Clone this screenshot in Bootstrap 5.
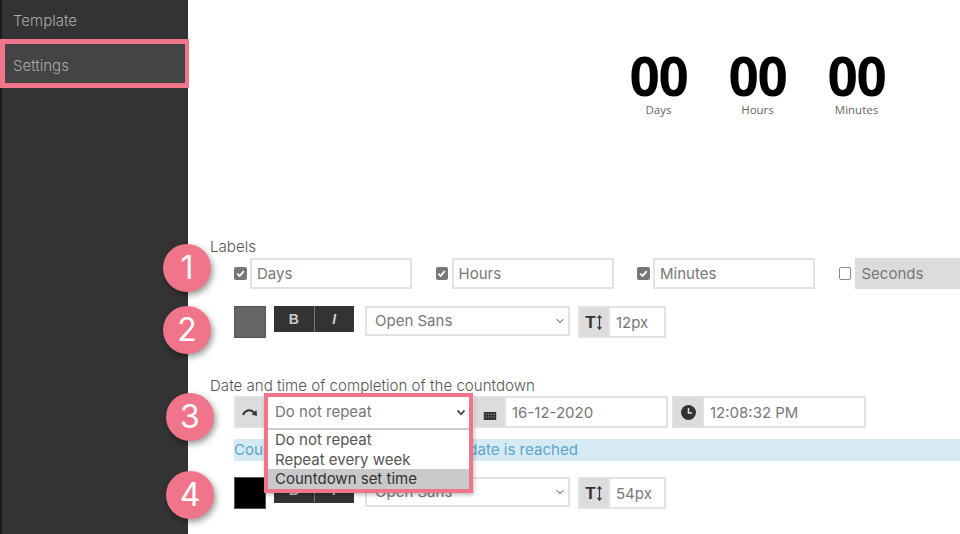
<!DOCTYPE html>
<html lang="en">
<head>
<meta charset="utf-8">
<title>Countdown settings</title>
<link href="https://cdn.jsdelivr.net/npm/bootstrap@5.3.0/dist/css/bootstrap.min.css" rel="stylesheet">
<style>
html,body{height:534px;overflow:hidden;background:#fff}
body{font-family:Inter,"Liberation Sans",sans-serif;font-size:15px;color:#666;position:relative}
.app-shell{height:534px;width:960px}
.side-panel{width:188px;flex:none;background:#333;border-left:2px solid #1c1c1c;padding-top:1px}
.side-link{display:block;height:39px;line-height:39px;padding-left:11px;color:#aaa;font-size:15px;font-weight:300;text-decoration:none}
.side-link.now{height:48px;line-height:52px;background:#444}
.main-pane{width:772px;overflow:hidden;flex:none}
.clock-strip{padding:49px 0 0 421px;height:238px}
.clock-cell{width:99px;text-align:center}
.clock-num{font-family:"Open Sans",sans-serif;font-weight:700;font-size:53px;line-height:54px;color:#000;letter-spacing:-1.2px}
.clock-cap{font-family:"Open Sans",sans-serif;font-size:11.5px;line-height:14px;color:#666}
.group-title{padding-left:22px;font-weight:300;line-height:17px;color:#555;font-size:15.1px}
.tool-row{padding-left:46px;display:flex;align-items:flex-start}
.label-row{margin-top:3px;height:48px}
.label-item{display:flex;align-items:center;width:201.5px;flex:none}
.tick{width:12.5px;height:12.5px;flex:none;border-radius:2px;background:#777;display:flex;align-items:center;justify-content:center;margin-right:3.5px}
.tick.off{background:#fff;border:1px solid #888}
.field{height:31px;width:162px;flex:none;border:2px solid #e2e2e2;border-radius:0;padding:0 5px;color:#777;font-size:15px;font-family:inherit;background:#fff}
.field.locked{background:#dcdcdc;width:170px;border-color:#dcdcdc}
.swatch{width:32px;height:32px;flex:none;border:1px solid #555;background:#666}
.swatch.black{background:#000}
.bi-group{margin-left:8px;display:flex;height:26px;width:80px;flex:none}
.bi-btn{flex:1;background:#333;color:#ccc;border:0;border-left:1px solid #777;padding:0;font-size:14px;font-weight:700;line-height:26px;border-radius:0;font-family:"Liberation Sans",sans-serif}
.bi-btn:first-child{border-left:0}
.pick{height:30px;width:205px;flex:none;margin-left:11px;border:2px solid #e2e2e2;border-radius:0;padding:0 6px 0 8px;font-size:15px;color:#777;font-family:inherit;background-position:right 3px center;background-size:10px 8px;line-height:26px}
.pick:focus{box-shadow:none;border-color:#e2e2e2}
.unit-group{display:flex;margin-left:8px;height:32px;flex:none}
.addon{width:32px;height:100%;background:#dcdcdc;border:2px solid #e2e2e2;display:flex;align-items:center;justify-content:center;flex:none;color:#333}
.addon b{font-family:"Liberation Sans",sans-serif;font-size:17px;line-height:1}
.unit-field{width:56px;height:32px;border:2px solid #e2e2e2;border-left:0;padding:0 6px;font-size:15px;color:#777;font-family:inherit;border-radius:0}
.style-row{height:48px}
.date-title{margin-top:23px}
.date-row{margin-top:2px;height:32px}
.date-pick{height:32px;width:204px;flex:none;border-left:0;border-radius:0}
.date-group{display:flex;flex:none;height:32px;width:194px;margin-left:4px}
.date-field{flex:1;min-width:0;height:32px;border:2px solid #e2e2e2;border-left:0;border-radius:0;padding:0 6px;font-size:15px;color:#777;font-family:inherit}
.cal-icon{margin-top:7px}
.info-strip{margin:11px 0 0 46px;height:22px;line-height:22px;background:#d6eaf4;color:#5ba5cc;font-size:15.1px}
.finish-row{margin-top:16px}
.pin{position:absolute;width:48px;height:48px;border-radius:50%;background:#f0758a;color:#fff;font-size:32px;font-weight:400;line-height:48px;text-align:center;box-shadow:2px 3px 6px rgba(0,0,0,.4);font-family:Inter,sans-serif}
.pin-a{left:163px;top:244px}
.pin-b{left:163px;top:306px}
.pin-c{left:166px;top:393px}
.pin-d{left:166px;top:471px}
.menu-frame{position:absolute;left:264px;top:393px;width:209px;height:100px;border:4px solid #f0758a;background:#fff;box-shadow:1px 2px 4px rgba(0,0,0,.25)}
.menu-head{height:33px;display:flex;align-items:center;justify-content:space-between;padding:0 3px 1px 7px;color:#777;border-bottom:2px solid #ccc;font-size:15px}
.menu-line{height:19.5px;line-height:19.5px;padding-left:7px;color:#555;font-size:15px}
.menu-line.picked{background:#c9c9c9;color:#333}
.focus-frame{position:absolute;left:0;top:39px;width:189px;height:49px;border:5px solid #f0758a;border-right-width:4px;pointer-events:none}
</style>
</head>
<body>
<div class="app-shell d-flex">
  <nav class="side-panel">
    <a class="side-link" href="#">Template</a>
    <a class="side-link now" href="#">Settings</a>
  </nav>
  <main class="main-pane">
    <div class="clock-strip d-flex">
      <div class="clock-cell"><div class="clock-num">00</div><div class="clock-cap">Days</div></div>
      <div class="clock-cell"><div class="clock-num">00</div><div class="clock-cap">Hours</div></div>
      <div class="clock-cell"><div class="clock-num">00</div><div class="clock-cap">Minutes</div></div>
    </div>
    <div class="group-title">Labels</div>
    <div class="tool-row label-row">
      <div class="label-item"><span class="tick"><svg width="9" height="9" viewBox="0 0 10 10"><path d="M1.5 5.2 4 7.8 8.6 2.3" fill="none" stroke="#fff" stroke-width="2"/></svg></span><input class="field" value="Days"></div>
      <div class="label-item"><span class="tick"><svg width="9" height="9" viewBox="0 0 10 10"><path d="M1.5 5.2 4 7.8 8.6 2.3" fill="none" stroke="#fff" stroke-width="2"/></svg></span><input class="field" value="Hours"></div>
      <div class="label-item"><span class="tick"><svg width="9" height="9" viewBox="0 0 10 10"><path d="M1.5 5.2 4 7.8 8.6 2.3" fill="none" stroke="#fff" stroke-width="2"/></svg></span><input class="field" value="Minutes"></div>
      <div class="label-item"><span class="tick off"></span><input class="field locked" value="Seconds" disabled></div>
    </div>
    <div class="tool-row style-row">
      <div class="swatch"></div>
      <div class="bi-group"><button class="bi-btn">B</button><button class="bi-btn"><i>I</i></button></div>
      <select class="form-select pick"><option>Open Sans</option></select>
      <div class="unit-group"><span class="addon"><b>T</b><svg width="7" height="15" viewBox="0 0 7 15"><path d="M3.5 1v13M1.5 3.2 3.5 1l2 2.2M1.5 11.8l2 2.2 2-2.2" fill="none" stroke="#333" stroke-width="1.2"/></svg></span><input class="unit-field" value="12px"></div>
    </div>
    <div class="group-title date-title">Date and time of completion of the countdown</div>
    <div class="tool-row date-row">
      <span class="addon"><svg width="16" height="10" viewBox="0 0 16 10"><path d="M1 8C3 3 8 1.800 12 5.500" fill="none" stroke="#333" stroke-width="2"/><path d="M9.500 7.500 15 9 14.500 3z" fill="#333"/></svg></span>
      <select class="form-select pick date-pick ms-0"><option>Do not repeat</option></select>
      <div class="date-group"><span class="addon"><svg class="cal-icon" width="14" height="8" viewBox="0 0 14 9"><path fill="#333" d="M0 0h14v9H0z"/><path fill="#dcdcdc" d="M2 2h1v1H2zM5 2h1v1H5zM8 2h1v1H8zM11 2h1v1h-1zM2 5h1v1H2zM5 5h1v1H5zM8 5h1v1H8zM11 5h1v1h-1z"/></svg></span><input class="date-field" value="16-12-2020"></div>
      <div class="date-group"><span class="addon"><svg width="15" height="15" viewBox="0 0 15 15"><circle cx="7.500" cy="7.500" r="7.500" fill="#333"/><path d="M7.500 3v5h3.500" fill="none" stroke="#dcdcdc" stroke-width="1.500"/></svg></span><input class="date-field" value="12:08:32 PM"></div>
    </div>
    <div class="info-strip">Countdown stops when the final date is reached</div>
    <div class="tool-row finish-row">
      <div class="swatch black"></div>
      <div class="bi-group"><button class="bi-btn">B</button><button class="bi-btn"><i>I</i></button></div>
      <select class="form-select pick"><option>Open Sans</option></select>
      <div class="unit-group"><span class="addon"><b>T</b><svg width="7" height="15" viewBox="0 0 7 15"><path d="M3.5 1v13M1.500 3.200 3.500 1l2 2.200M1.500 11.800l2 2.200 2-2.200" fill="none" stroke="#333" stroke-width="1.200"/></svg></span><input class="unit-field" value="54px"></div>
    </div>
  </main>
</div>
<div class="focus-frame"></div>
<div class="pin pin-a">1</div>
<div class="pin pin-b">2</div>
<div class="pin pin-c">3</div>
<div class="pin pin-d">4</div>
<div class="menu-frame">
  <div class="menu-head"><span>Do not repeat</span><svg width="10" height="7" viewBox="0 0 11 8"><path d="M1.500 1.500 5.500 6l4-4.500" fill="none" stroke="#444" stroke-width="2"/></svg></div>
  <div class="menu-line">Do not repeat</div>
  <div class="menu-line">Repeat every week</div>
  <div class="menu-line picked">Countdown set time</div>
</div>
</body>
</html>
